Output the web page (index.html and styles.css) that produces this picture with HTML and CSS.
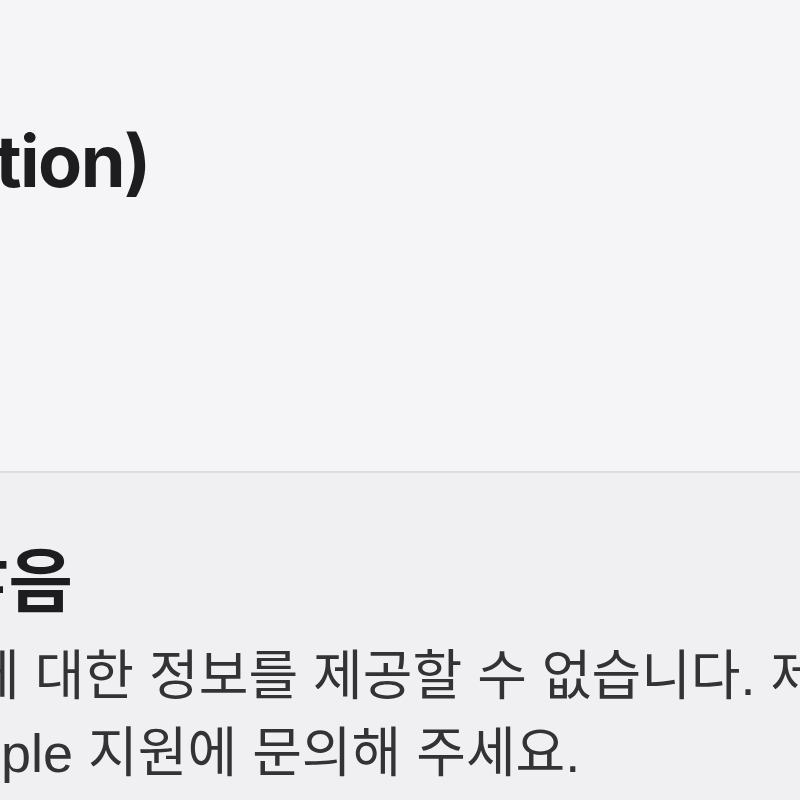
FILE: index.html
```html
<!DOCTYPE html>
<html lang="ko">
  <head>
    <meta charset="UTF-8" />
    <title>제품 정보</title>
    <link rel="stylesheet" href="styles.css">
  </head>
  <body>
    <div class="hero">
      <h1 class="hero-title">Information)</h1>
    </div>

    <div class="notice">
      <h2 class="notice-title">않음</h2>
      <p class="notice-text">
        <span class="line line-1">에 대한 정보를 제공할 수 없습니다. 제품 관련 문의는</span>
        <span class="line line-2">Apple 지원에 문의해 주세요.</span>
      </p>
    </div>
  </body>
</html>
```

FILE: styles.css
```css
body {
  margin: 0;
  font-family: Inter, "Noto Sans CJK KR", sans-serif;
  background-color: #f0f0f3;
  overflow: hidden;
}
.hero {
  height: 473px;
  background-color: #f5f5f7;
  border-bottom: 2px solid #dcdce1;
  padding-top: 125px;
  box-sizing: border-box;
}
.hero-title {
  margin: 0 0 0 -268px;
  font-size: 72px;
  font-weight: 700;
  line-height: 72px;
  letter-spacing: -1.5px;
  color: #1d1d1f;
  white-space: nowrap;
}
.notice {
  padding-top: 73px;
}
.notice-title {
  margin: 0 0 0 -56px;
  font-size: 70px;
  font-weight: 700;
  line-height: 72px;
  color: #1d1d1f;
  white-space: nowrap;
}
.notice-text {
  margin: 20px 0 0;
  font-family: "Liberation Sans", "Noto Sans CJK KR", sans-serif;
  font-size: 54px;
  line-height: 77px;
  color: #333336;
}
.line {
  display: block;
  white-space: nowrap;
}
.line-1 {
  margin-left: -30px;
}
.line-2 {
  margin-left: -65px;
}
```
